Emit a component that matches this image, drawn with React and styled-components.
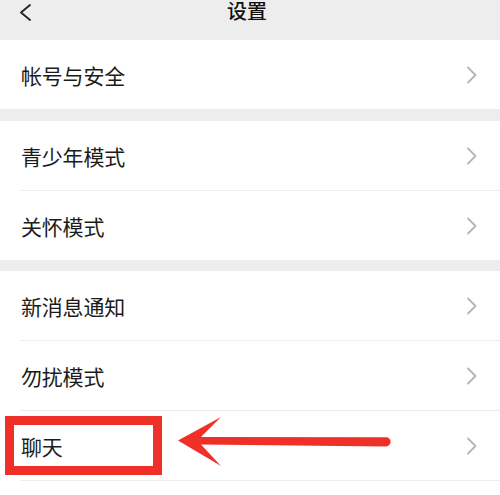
import React from "react";
import styled, { createGlobalStyle } from "styled-components";

const Global = createGlobalStyle`
  html, body { margin: 0; padding: 0; }
  body {
    background: #ededed;
    font-family: "Noto Sans CJK SC", "Noto Sans", sans-serif;
  }
`;

const Page = styled.div`
  width: 500px;
  height: 495px;
  overflow: hidden;
  background: #ededed;
`;

const Header = styled.header`
  height: 40px;
  display: grid;
  grid-template-columns: 1fr auto 1fr;
  align-items: start;
  padding-right: 6px;
`;

const BackButton = styled.div`
  padding: 4px 0 0 18px;
  line-height: 0;
`;

const Title = styled.h1`
  margin: 0;
  font-size: 20px;
  line-height: 21px;
  font-weight: 500;
  color: #111;
`;

const Section = styled.section`
  background: #fff;
  margin-bottom: ${(p) => p.$gap}px;
`;

const Row = styled.div`
  position: relative;
  height: 69px;
  display: flex;
  align-items: center;
  justify-content: space-between;
  padding: 0 22px 0 21px;
`;

const Label = styled.span`
  font-size: 21px;
  color: #1b1b1b;
  letter-spacing: -0.2px;
`;

const Divider = styled.div`
  height: 1px;
  margin-left: 20px;
  background: #ececec;
`;

const Highlight = styled.div`
  position: absolute;
  left: 5px;
  top: 5px;
  width: 157px;
  height: 59px;
  box-sizing: border-box;
  border: 9px solid #ee3028;
`;

const ArrowSvg = styled.svg`
  position: absolute;
  left: 170px;
  top: -1px;
`;

const Chevron = () => (
  <svg width="12" height="18" viewBox="0 0 12 18">
    <path d="M2 1.5 L9.5 9 L2 16.5" fill="none" stroke="#b5b5b5" strokeWidth="1.8" strokeLinecap="round" strokeLinejoin="round" />
  </svg>
);

const BackIcon = () => (
  <svg width="15" height="17" viewBox="0 0 15 17">
    <path d="M12 1 L3 8.5 L12 16" fill="none" stroke="#222" strokeWidth="1.8" strokeLinecap="round" strokeLinejoin="round" />
  </svg>
);

const Arrow = () => (
  <ArrowSvg width="230" height="62" viewBox="0 0 230 62">
    <path
      d="M8 30.5 L51 7 Q38 20 31 27 L216 27.2 A4.6 4.6 0 0 1 216 36.4 L31 34.5 Q38 42 51 56 Z"
      fill="#ee3028"
    />
  </ArrowSvg>
);

const Item = ({ label, children }) => (
  <Row>
    <Label>{label}</Label>
    <Chevron />
    {children}
  </Row>
);

export default function App() {
  return (
    <>
      <Global />
      <Page>
        <Header>
          <BackButton>
            <BackIcon />
          </BackButton>
          <Title>设置</Title>
          <div />
        </Header>
        <Section $gap={12}>
          <Item label="帐号与安全" />
        </Section>
        <Section $gap={11}>
          <Item label="青少年模式" />
          <Divider />
          <Item label="关怀模式" />
        </Section>
        <Section $gap={0}>
          <Item label="新消息通知" />
          <Divider />
          <Item label="勿扰模式" />
          <Divider />
          <Item label="聊天">
            <Highlight />
            <Arrow />
          </Item>
          <Divider />
          <Row />
        </Section>
      </Page>
    </>
  );
}
